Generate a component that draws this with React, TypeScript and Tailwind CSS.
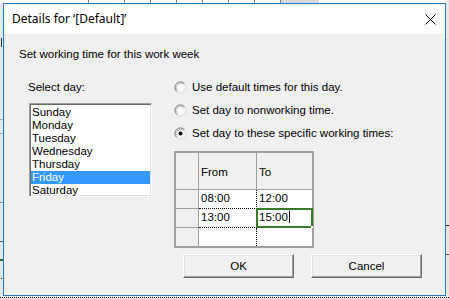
import React from "react";

function Radio({ checked }: { checked?: boolean }) {
  return (
    <svg width="13" height="13" viewBox="0 0 13 13" className="shrink-0">
      <defs>
        <radialGradient id="rg" cx="0.4" cy="0.4" r="0.7">
          <stop offset="0" stopColor="#ffffff" />
          <stop offset="1" stopColor="#f2f2f2" />
        </radialGradient>
      </defs>
      <circle cx="6.5" cy="6.5" r="5.5" fill="url(#rg)" stroke="#d8d8d8" strokeWidth="1" />
      <path d="M2.6 10.4 A5.5 5.5 0 0 1 10.4 2.6" fill="none" stroke="#7a7a7a" strokeWidth="1" />
      <path d="M3.4 9.6 A4.4 4.4 0 0 1 9.6 3.4" fill="none" stroke="#c0c0c0" strokeWidth="1" />
      {checked && <circle cx="6.5" cy="6.5" r="2" fill="#000000" />}
    </svg>
  );
}

function Background() {
  const xs = [88, 124, 150, 176, 202, 228, 254, 280];
  return (
    <svg className="absolute inset-0" width="449" height="299" viewBox="0 0 449 299">
      <rect x="0" y="0" width="449" height="3" fill="#ffffff" />
      {xs.map((x) => (
        <rect key={x} x={x} y="0" width="1" height="3" fill="#7a7a7a" />
      ))}
      <rect x="281" y="0" width="38" height="3" fill="#d8d8d8" />
      <rect x="0" y="3" width="3" height="296" fill="#e6e6e6" />
      <rect x="1" y="38" width="1" height="9" fill="#333333" />
      <rect x="0" y="119" width="3" height="1" fill="#a0a0a0" />
      <rect x="0" y="133" width="3" height="1" fill="#a0a0a0" />
      <rect x="0" y="202" width="3" height="1" fill="#8a8a8a" />
      <rect x="0" y="241" width="3" height="1" fill="#555555" />
      <rect x="0" y="259" width="3" height="2" fill="#2e6b2e" />
      <rect x="1" y="278" width="1" height="1" fill="#000000" />
      <rect x="446" y="0" width="3" height="299" fill="#e6e6e6" />
      <rect x="446" y="225" width="3" height="1" fill="#222222" />
      <rect x="446" y="254" width="3" height="1" fill="#555555" />
      <rect x="0" y="296" width="449" height="3" fill="#f0f0f0" />
      <line x1="0" y1="297.5" x2="449" y2="297.5" stroke="#000" strokeWidth="1" strokeDasharray="1 1" />
    </svg>
  );
}

export default function App() {
  const days = ["Sunday", "Monday", "Tuesday", "Wednesday", "Thursday", "Friday", "Saturday"];
  const body = "font-['Liberation_Sans',Arial,sans-serif] text-[11.5px] leading-[13px] text-black";
  return (
    <div className="relative h-[299px] w-[449px] overflow-hidden bg-[#e6e6e6] p-[3px]">
      <Background />
      <div className="relative flex h-[293px] w-[443px] flex-col border border-[#2b79c4] bg-[#f0f0f0]">
        <div className="flex h-[30px] shrink-0 items-center justify-between bg-white pl-[8px] pr-[9px]">
          <span className="font-['Noto_Sans',sans-serif] text-[12px] leading-[16px] text-black">
            Details for ‘[Default]’
          </span>
          <svg width="11" height="11" viewBox="0 0 11 11">
            <path d="M0.5 0.5 L10.5 10.5 M10.5 0.5 L0.5 10.5" stroke="#000" strokeWidth="1" />
          </svg>
        </div>
        <div className={`flex flex-col pl-[15px] pt-[14px] ${body}`}>
          <div>Set working time for this work week</div>
          <div className="mt-[20px] flex">
            <div className="ml-[9px] flex w-[124px] flex-col">
              <div>Select day:</div>
              <div className="ml-[1px] mt-[9px] h-[94px] w-[123px] border border-b-[#ffffff] border-l-[#a0a0a0] border-r-[#ffffff] border-t-[#a0a0a0] bg-white shadow-[inset_1px_1px_0_#696969,inset_-1px_-1px_0_#e3e3e3] p-[1px]">
                <div className="pt-[1px]">
                  {days.map((d) => (
                    <div
                      key={d}
                      className={`h-[13px] pl-[1px] leading-[13px] ${d === "Friday" ? "bg-[#3399ff] text-white" : ""}`}
                    >
                      {d}
                    </div>
                  ))}
                </div>
              </div>
            </div>
            <div className="ml-[22px] flex flex-col">
              {[
                { t: "Use default times for this day.", c: false },
                { t: "Set day to nonworking time.", c: false },
                { t: "Set day to these specific working times:", c: true },
              ].map((r) => (
                <div key={r.t} className="flex h-[23px] items-start gap-[5px]">
                  <Radio checked={r.c} />
                  <span className="leading-[13px]">{r.t}</span>
                </div>
              ))}
              <div className="mt-[1px] w-[140px] border-2 border-[#a0a0a0] bg-white">
                <div className="grid grid-cols-[23px_58px_55px] grid-rows-[37px_19px_19px_18px]">
                  <div className="border-b border-r border-[#a0a0a0] bg-[#f0f0f0]" />
                  <div className="flex items-center border-b border-r border-[#a0a0a0] bg-[#f0f0f0] pl-[2px] pt-[2px]">From</div>
                  <div className="flex items-center border-b border-[#a0a0a0] bg-[#f0f0f0] pl-[2px] pt-[2px]">To</div>

                  <div className="border-b border-r border-[#a0a0a0] bg-[#f0f0f0]" />
                  <div className="border-b border-r border-dotted border-black pl-[2px] pt-[2px]">08:00</div>
                  <div className="border-b border-dotted border-black pl-[2px] pt-[2px]">12:00</div>

                  <div className="border-b border-r border-[#a0a0a0] bg-[#f0f0f0]" />
                  <div className="border-b border-r border-dotted border-black pl-[2px] pt-[2px]">13:00</div>
                  <div className="relative border-b border-dotted border-black pl-[2px] pt-[2px]">
                    <span className="relative">15:00</span>
                    <span className="relative ml-[1px] inline-block h-[12px] w-[1px] align-top bg-black" />
                    <span className="pointer-events-none absolute inset-[-1px] border-2 border-[#387c2b]" />
                    <span className="absolute bottom-[-1px] right-[-1px] h-[2px] w-[2px] bg-white" />
                  </div>

                  <div className="border-r border-[#a0a0a0] bg-[#f0f0f0]" />
                  <div className="border-r border-dotted border-black" />
                  <div />
                </div>
              </div>
              <div className="ml-[9px] mt-[6px] flex gap-[17px]">
                {["OK", "Cancel"].map((b) => (
                  <div
                    key={b}
                    className="flex h-[24px] w-[111px] items-center justify-center border border-b-[#696969] border-l-[#ffffff] border-r-[#696969] border-t-[#ffffff] bg-[#f0f0f0] shadow-[inset_-1px_-1px_0_#a0a0a0,inset_1px_1px_0_#e3e3e3]"
                  >
                    {b}
                  </div>
                ))}
              </div>
            </div>
          </div>
        </div>
      </div>
    </div>
  );
}
